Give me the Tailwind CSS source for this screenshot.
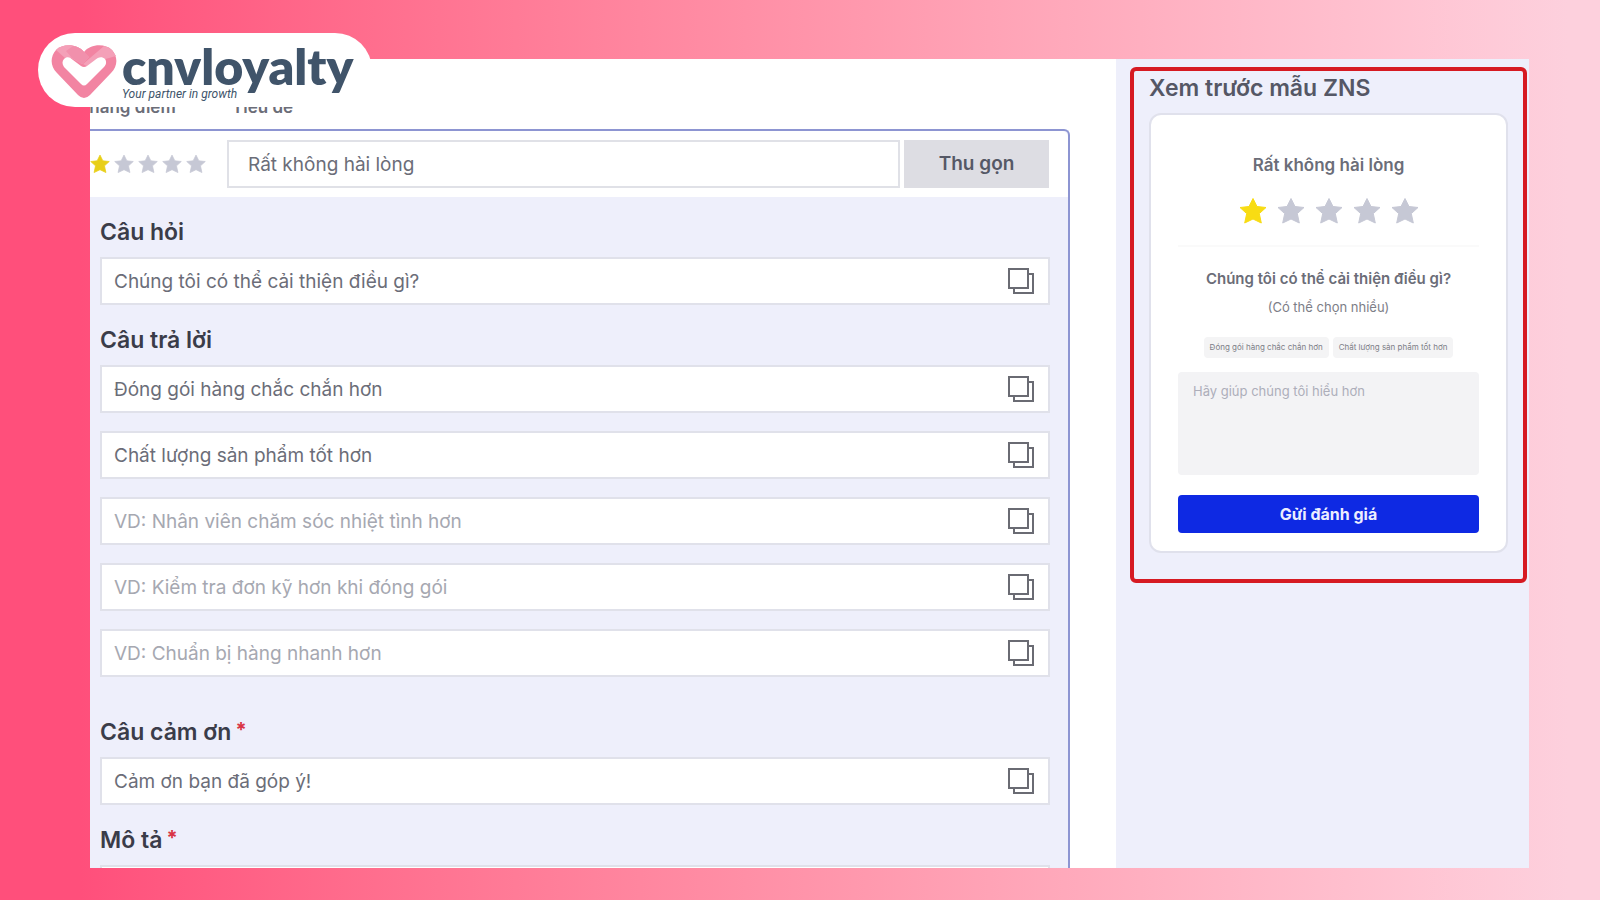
<!DOCTYPE html>
<html lang="vi">
<head>
<meta charset="utf-8">
<title>CNV Loyalty – Mẫu ZNS</title>
<script src="https://cdn.jsdelivr.net/npm/@tailwindcss/browser@4"></script>
</head>
<body class="relative flex h-screen flex-col overflow-hidden bg-linear-to-r from-[#ff4f7b] from-5% to-[#fdd0dd] to-98% font-['Inter','Noto_Sans',sans-serif] text-[#6b6d78]">
<svg class="hidden">
  <symbol id="star" viewBox="0 0 28 28"><path d="M14 1.5l4 8 9 1-6.7 6.1 2 9.4-8.3-4-8.3 4 2-9.4L1 10.500l9-1z" fill="currentColor" stroke="currentColor" stroke-linejoin="round"/></symbol>
  <symbol id="copy" viewBox="0 0 26 26"><g fill="none" stroke="#6a6b73" stroke-width="2"><path d="M1 1h19v19H1z"/><path d="M20 6h5v19H6v-5"/></g></symbol>
</svg>

<header class="absolute top-[33px] left-[38px] z-10 flex h-[74px] w-[334px] items-center rounded-full bg-white pl-3">
  <svg class="mt-1 h-[56px] w-[68px] shrink-0" viewBox="0 0 68 56" role="img" aria-label="CNV">
    <path d="M34 8 C28 0 13 -1 6 6 C0 13 0 22 7 29 L28 51 Q34 57 40 51 L61 29 C68 22 68 13 62 6 C55 -1 40 0 34 8Z" fill="#f284a2"/>
    <path d="M6 6 C13 -1 28 0 34 8 L39 13 L32 20 L21 14 L15 14Z" fill="#f4a0b8"/>
    <path d="M23 2 Q30 3 34 8 L39 13 L32 20 L22 14 L16 7Z" fill="#f190ac"/>
    <path d="M62 6 L66 12 L52 16 L45 18 L40 24 L33 20 L54 2 Q59 3 62 6Z" fill="#f4a0b8"/>
    <path d="M14 15 C17 12 20 13 23 16 L31 22 Q34 24 37 22 L45 16 C48 13 52 12 55 15 C57 18 56 21 54 23 L37 40 Q34 43 31 40 L14 23 C12 20 12 17 14 15Z" fill="#fff"/>
  </svg>
  <div class="relative ml-1 h-full">
    <p class="pt-1 font-['Lato',sans-serif] text-[50px] leading-[58px] font-extrabold text-[#40546a]">cnvloyalty</p>
    <p class="absolute top-[53px] left-0 font-['Roboto',sans-serif] text-xs leading-4 whitespace-nowrap text-[#40546a] italic">Your partner in growth</p>
  </div>
</header>

<main class="mt-[59px] mr-[71px] mb-8 ml-[90px] flex min-h-0 flex-1 overflow-hidden bg-white">
  <section class="flex min-w-0 flex-1 flex-col">
    <div class="-ml-3 flex h-[70px] shrink-0 items-end pb-3 text-[17px] leading-5 font-semibold">
      <span class="w-[154px]">Thang điểm</span>
      <label for="title">Tiêu đề <span class="text-red-400">*</span></label>
    </div>
    <form class="mr-[46px] flex-1 rounded-tr-md border-t-2 border-r-2 border-[#8d95d2] bg-[#eeeffb]">
      <div class="flex items-center rounded-tr-md bg-white py-[9px] pr-[19px]">
        <div class="flex w-[137px] shrink-0 gap-1 text-[#c6c8d5]" role="img" aria-label="1 trên 5 sao">
          <svg class="size-5 text-[#e8cf18]"><use href="#star"/></svg>
          <svg class="size-5"><use href="#star"/></svg>
          <svg class="size-5"><use href="#star"/></svg>
          <svg class="size-5"><use href="#star"/></svg>
          <svg class="size-5"><use href="#star"/></svg>
        </div>
        <input id="title" value="Rất không hài lòng" class="h-12 min-w-0 flex-1 border-2 border-[#e0e1e7] bg-white px-[19px] text-[19px] outline-none">
        <button type="button" class="ml-1 h-12 w-[145px] bg-[#dddde3] text-[19px] font-semibold text-[#555866]">Thu gọn</button>
      </div>
      <div class="pt-[19px] pr-[18px] pl-[10px]">
        <label for="q" class="block h-[41px] text-[23px] leading-8 font-semibold text-[#3a3c49]">Câu hỏi</label>
        <div class="flex h-12 items-center border-2 border-[#e0e1ea] bg-white pr-[14px]">
          <input id="q" value="Chúng tôi có thể cải thiện điều gì?" class="h-full min-w-0 flex-1 pl-3 text-[19px] outline-none">
          <button type="button" aria-label="Sao chép"><svg class="size-[26px]"><use href="#copy"/></svg></button>
        </div>
        <h2 class="mt-[19px] h-[41px] text-[23px] leading-8 font-semibold text-[#3a3c49]">Câu trả lời</h2>
        <div class="flex flex-col gap-[18px]">
          <div class="flex h-12 items-center border-2 border-[#e0e1ea] bg-white pr-[14px]">
            <input aria-label="Câu trả lời 1" value="Đóng gói hàng chắc chắn hơn" class="h-full min-w-0 flex-1 pl-3 text-[19px] outline-none">
            <button type="button" aria-label="Sao chép"><svg class="size-[26px]"><use href="#copy"/></svg></button>
          </div>
          <div class="flex h-12 items-center border-2 border-[#e0e1ea] bg-white pr-[14px]">
            <input aria-label="Câu trả lời 2" value="Chất lượng sản phẩm tốt hơn" class="h-full min-w-0 flex-1 pl-3 text-[19px] outline-none">
            <button type="button" aria-label="Sao chép"><svg class="size-[26px]"><use href="#copy"/></svg></button>
          </div>
          <div class="flex h-12 items-center border-2 border-[#e0e1ea] bg-white pr-[14px]">
            <input aria-label="Câu trả lời 3" placeholder="VD: Nhân viên chăm sóc nhiệt tình hơn" class="h-full min-w-0 flex-1 pl-3 text-[19px] outline-none placeholder:text-[#a6a8b1]">
            <button type="button" aria-label="Sao chép"><svg class="size-[26px]"><use href="#copy"/></svg></button>
          </div>
          <div class="flex h-12 items-center border-2 border-[#e0e1ea] bg-white pr-[14px]">
            <input aria-label="Câu trả lời 4" placeholder="VD: Kiểm tra đơn kỹ hơn khi đóng gói" class="h-full min-w-0 flex-1 pl-3 text-[19px] outline-none placeholder:text-[#a6a8b1]">
            <button type="button" aria-label="Sao chép"><svg class="size-[26px]"><use href="#copy"/></svg></button>
          </div>
          <div class="flex h-12 items-center border-2 border-[#e0e1ea] bg-white pr-[14px]">
            <input aria-label="Câu trả lời 5" placeholder="VD: Chuẩn bị hàng nhanh hơn" class="h-full min-w-0 flex-1 pl-3 text-[19px] outline-none placeholder:text-[#a6a8b1]">
            <button type="button" aria-label="Sao chép"><svg class="size-[26px]"><use href="#copy"/></svg></button>
          </div>
        </div>
        <label for="thanks" class="mt-[39px] flex h-[41px] gap-1 text-[23px] leading-8 font-semibold text-[#3a3c49]">Câu cảm ơn <span class="text-xl leading-7 font-bold text-[#d93444]">*</span></label>
        <div class="flex h-12 items-center border-2 border-[#e0e1ea] bg-white pr-[14px]">
          <input id="thanks" value="Cảm ơn bạn đã góp ý!" class="h-full min-w-0 flex-1 pl-3 text-[19px] outline-none">
          <button type="button" aria-label="Sao chép"><svg class="size-[26px]"><use href="#copy"/></svg></button>
        </div>
        <label for="desc" class="mt-[19px] flex h-[41px] gap-1 text-[23px] leading-8 font-semibold text-[#3a3c49]">Mô tả <span class="text-xl leading-7 font-bold text-[#d93444]">*</span></label>
        <div class="flex h-12 items-center border-2 border-[#e0e1ea] bg-white pr-[14px]">
          <input id="desc" class="h-full min-w-0 flex-1 pl-3 text-[19px] outline-none">
        </div>
      </div>
    </form>
  </section>

  <aside class="w-[413px] shrink-0 bg-[#eeeffb] pt-2 pr-[2px] pl-[14px]">
    <section class="rounded-md border-4 border-[#d61a22] px-[15px] pt-px pb-[26px]">
      <h2 class="mb-[9px] text-[23px] leading-8 font-semibold text-[#555765]">Xem trước mẫu ZNS</h2>
      <div class="flex flex-col items-center rounded-xl border-2 border-[#e0e1ec] bg-white px-[27px] pt-[38px] pb-[18px]">
        <p class="text-[17px] leading-6 font-semibold">Rất không hài lòng</p>
        <div class="mt-5 flex gap-[10px] text-[#c6c8d5]" role="img" aria-label="1 trên 5 sao">
          <svg class="size-7 text-[#f8dc13]"><use href="#star"/></svg>
          <svg class="size-7"><use href="#star"/></svg>
          <svg class="size-7"><use href="#star"/></svg>
          <svg class="size-7"><use href="#star"/></svg>
          <svg class="size-7"><use href="#star"/></svg>
        </div>
        <hr class="mt-5 w-full border-t-2 border-[#fafafa]">
        <p class="mt-5 text-[15px] leading-6 font-semibold">Chúng tôi có thể cải thiện điều gì?</p>
        <p class="mt-1 text-[13px] leading-6 text-[#7d7e87]">(Có thể chọn nhiều)</p>
        <div class="mt-[18px] flex gap-1 text-[8px] leading-[21px] whitespace-nowrap text-[#7d7e87]">
          <button type="button" class="rounded-sm bg-[#f4f4f5] px-[6px]">Đóng gói hàng chắc chắn hơn</button>
          <button type="button" class="rounded-sm bg-[#f4f4f5] px-[6px]">Chất lượng sản phẩm tốt hơn</button>
        </div>
        <textarea aria-label="Góp ý" placeholder="Hãy giúp chúng tôi hiểu hơn" class="mt-[14px] h-[103px] w-full resize-none rounded-sm bg-[#f3f3f5] px-[15px] py-[7px] text-[13px] leading-6 outline-none placeholder:text-[#adaeba]"></textarea>
        <button type="button" class="mt-5 h-[38px] w-full rounded-sm bg-[#0e29e3] text-base font-bold text-[#eceeff]">Gửi đánh giá</button>
      </div>
    </section>
  </aside>
</main>
</body>
</html>
